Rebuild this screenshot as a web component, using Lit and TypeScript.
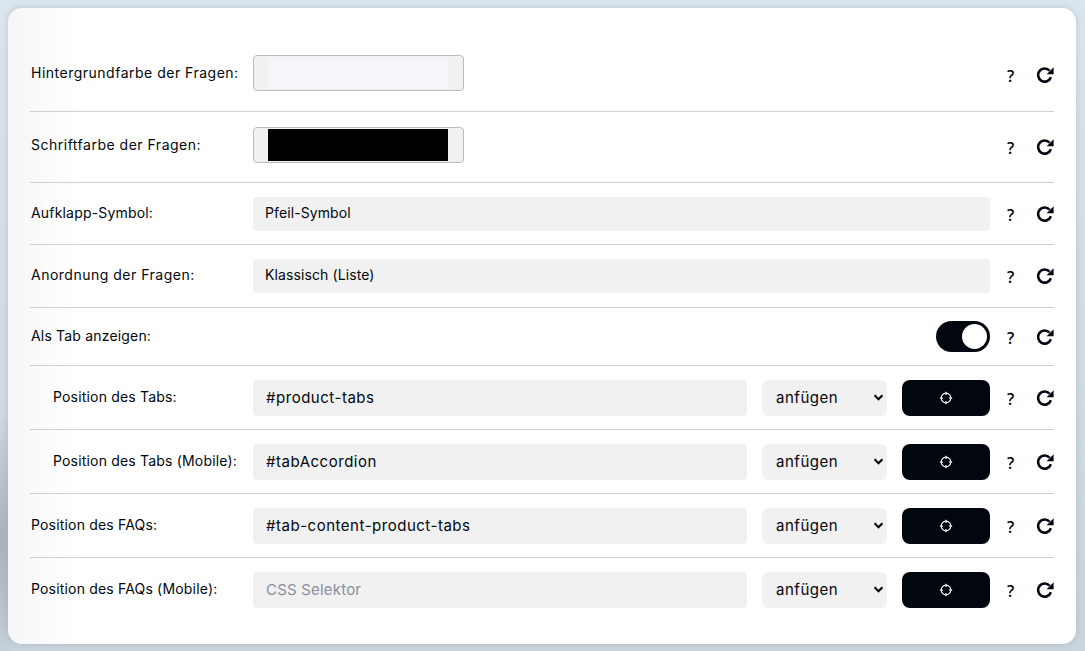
import { LitElement, html, css } from "lit";
import { customElement } from "lit/decorators.js";

const help = html`<span class="q">?</span>`;
const reset = html`<svg class="r" viewBox="0 0 18 18" width="18" height="18"><path d="M13.6 4.6A6.6 6.6 0 1 0 14.9 11.3" fill="none" stroke="#02070f" stroke-width="2.6"/><path d="M17.6 1.2V8.2H10.6Z" fill="#02070f"/></svg>`;
const aim = html`<svg viewBox="0 0 14 14" width="14" height="14"><circle cx="7" cy="7" r="4.8" fill="none" stroke="#fff" stroke-width="1.2"/><path d="M7 .8V4M7 10V13.2M.8 7H4M10 7H13.2" stroke="#fff" stroke-width="1.1"/></svg>`;

@customElement("app-root")
export class AppRoot extends LitElement {
  static styles = css`
    :host { display: block; width: 1085px; height: 651px; overflow: hidden; position: relative;
      background: radial-gradient(ellipse 30px 130px at 0 540px,#a7b2bb,transparent), linear-gradient(180deg,#dbe5ed 0,#c9d4dd 100%); font-family: "Inter", sans-serif; color: #02070f; }
    .card { box-sizing: border-box; margin: 8px 0 0 8px; width: 1068px; height: 636px; background: linear-gradient(90deg,#f6f6f6 0,#fff 70px); border-radius: 14px; padding: 33px 22px 0; box-shadow: 0 0 6px rgba(90,110,130,.25); }
    .row { display: flex; align-items: center; border-top: 1px solid #cfcfcf; }
    .row:first-child { border-top: 0; padding: 14px 0 20px; }
    .c { padding: 15px 0 19px; }
    .s { padding: 14px 0 13px; }
    .s2 { padding: 14px 0 14px; }
    .t { padding: 13px 0 13px; }
    .p { padding: 14px 0 13px; }
    .lbl { box-sizing: border-box; padding-left: 1px; width: 223px; flex: none; font-size: 14px; letter-spacing: .18px; line-height: 18px; position: relative; top: -1px; }
    .lift { top: 0; }
    .w { letter-spacing: .5px; }
    .in .lbl { padding-left: 23px; }
    .color { box-sizing: border-box; width: 211px; height: 36px; flex: none; border: 1px solid #bbb; border-radius: 4px; background: #f1f1f1; padding: 1px 15px 1px 14px; display: flex; }
    .swatch { flex: 1; }
    .box { box-sizing: border-box; background: #f1f1f1; border-radius: 4px; padding: 0 13px 2px; font-size: 15px; letter-spacing: .52px; display: flex; align-items: center; height: 36px; }
    .grow { flex: 1; }
    .sel { height: 34px; font-size: 14px; padding: 0 12px 3px; letter-spacing: .1px; }
    .place { color: #8a8f9f; letter-spacing: .2px; }
    .drop { width: 125px; flex: none; margin-left: 15px; justify-content: space-between; padding: 0 0 2px 14px; border-radius: 6px; }
    .drop svg { margin-right: 3px; }
    .btn { width: 88px; height: 36px; flex: none; margin-left: 15px; background: #02070f; border-radius: 8px; display: flex; align-items: center; justify-content: center; }
    .spacer { flex: 1; }
    .tog { width: 54px; height: 31px; background: #02070f; border-radius: 16px; position: relative; flex: none; }
    .tog::after { content: ""; position: absolute; right: 3px; top: 3px; width: 25px; height: 25px; border-radius: 50%; background: #fff; }
    .q { width: 42px; flex: none; padding-left: 17px; box-sizing: border-box; font-family: "Open Sans", sans-serif; font-weight: 600; font-size: 16px; line-height: 18px; position: relative; top: 1px; }
    .r { flex: none; margin-left: 4px; position: relative; }
    .acts { display: flex; align-items: center; flex: none; width: 64px; }
    .hi .r { top: 2px; }
    .hi .q { top: 3px; }
  `;
  private acts(hi = false) { return html`<div class="acts ${hi ? "hi" : ""}">${help}${reset}</div>`; }
  private target(v: string, place = false) {
    return html`<div class="box grow ${place ? "place" : ""}">${v}</div>
      <div class="box drop">anfügen<svg viewBox="0 0 12 8" width="11" height="7"><path d="M1.5 1.5 6 6l4.5-4.5" fill="none" stroke="#02070f" stroke-width="2.4"/></svg></div>
      <div class="btn">${aim}</div>${this.acts()}`;
  }
  render() {
    return html`<div class="card">
      <div class="row"><div class="lbl lift w">Hintergrundfarbe der Fragen:</div><div class="color"><div class="swatch" style="background:#f5f6fa"></div></div><div class="spacer"></div>${this.acts(true)}</div>
      <div class="row c"><div class="lbl lift w">Schriftfarbe der Fragen:</div><div class="color"><div class="swatch" style="background:#000"></div></div><div class="spacer"></div>${this.acts(true)}</div>
      <div class="row s"><div class="lbl">Aufklapp-Symbol:</div><div class="box grow sel">Pfeil-Symbol</div>${this.acts()}</div>
      <div class="row s2"><div class="lbl w">Anordnung der Fragen:</div><div class="box grow sel">Klassisch (Liste)</div>${this.acts()}</div>
      <div class="row t"><div class="lbl">Als Tab anzeigen:</div><div class="spacer"></div><div class="tog"></div>${this.acts()}</div>
      <div class="row p in"><div class="lbl">Position des Tabs:</div>${this.target("#product-tabs")}</div>
      <div class="row p in"><div class="lbl">Position des Tabs (Mobile):</div>${this.target("#tabAccordion")}</div>
      <div class="row p"><div class="lbl">Position des FAQs:</div>${this.target("#tab-content-product-tabs")}</div>
      <div class="row p"><div class="lbl">Position des FAQs (Mobile):</div>${this.target("CSS Selektor", true)}</div>
    </div>`;
  }
}
